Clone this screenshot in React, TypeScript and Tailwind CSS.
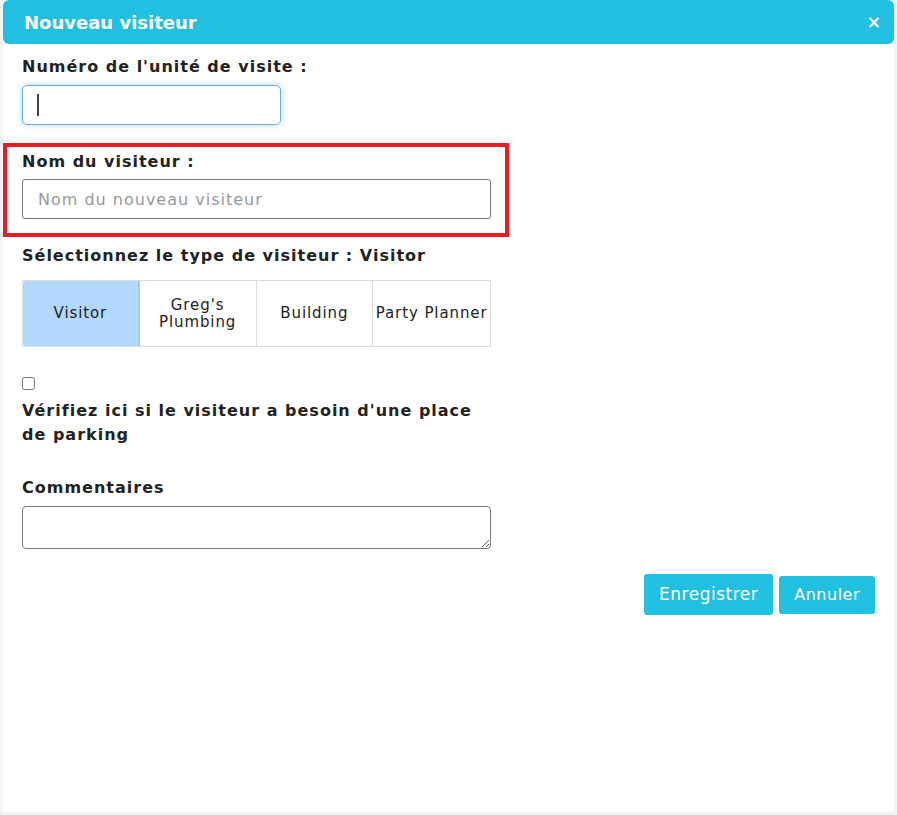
import { useState } from "react";

const types = ["Visitor", "Greg's Plumbing", "Building", "Party Planner"];

export default function App() {
  const [selected, setSelected] = useState<string>("Visitor");
  const [parking, setParking] = useState<boolean>(false);

  return (
    <div className="w-[897px] h-[815px] bg-[#f3f4f5] pl-[3px] pr-[3px] pb-[3px] font-['DejaVu_Sans',sans-serif] text-[#222]">
      <div className="h-full bg-white flex flex-col">
        <div className="h-[44px] bg-[#21c0e0] rounded-[6px] flex items-center justify-between pl-[21px] pr-[13px]">
          <h2 className="text-white font-bold text-[18px]">Nouveau visiteur</h2>
          <span className="text-white font-bold text-[17px] leading-none">×</span>
        </div>

        <div className="px-[19px] pt-[13px]">
          <label className="block font-bold text-[16px] tracking-[1px] leading-[20px]">
            Numéro de l'unité de visite :
          </label>
          <div className="mt-[8px] w-[259px] h-[40px] border border-[#66afe9] rounded-[5px] shadow-[0_0_6px_rgba(102,175,233,0.5)] flex items-center pl-[14px]">
            <span className="w-[2px] h-[22px] bg-[#444]" />
          </div>

          <div className="mt-[18px] -ml-[19px] w-[506px] border-4 border-[#ee1c25] pl-[15px] pr-[14px] pt-[5px] pb-[14px]">
            <label className="block font-bold text-[16px] tracking-[1px] leading-[20px]">Nom du visiteur :</label>
            <input
              type="text"
              placeholder="Nom du nouveau visiteur"
              className="mt-[7px] w-[469px] h-[40px] border border-[#767676] rounded-[3px] px-[15px] text-[16px] tracking-[1px] placeholder:text-[#999] outline-none"
            />
          </div>

          <p className="mt-[9px] font-bold text-[16px] tracking-[1px] leading-[20px]">
            Sélectionnez le type de visiteur : {selected}
          </p>
          <div className="mt-[14px] w-[469px] h-[67px] grid grid-cols-4 border border-[#dcdcdc]">
            {types.map((t, i) => (
              <button
                key={t}
                onClick={() => setSelected(t)}
                className={
                  selected === t
                    ? "bg-[#b3d8fd] border-r-2 border-[#a3c8ee] rounded-l-[3px] text-[15px] tracking-[0.9px] leading-[17px] px-0"
                    : "bg-white text-[15px] tracking-[0.9px] leading-[17px] px-0 " +
                      (i < 3 ? "border-r border-[#dcdcdc]" : "")
                }
              >
                {t === "Greg's Plumbing" ? (
                  <>
                    Greg's
                    <br />
                    Plumbing
                  </>
                ) : (
                  t
                )}
              </button>
            ))}
          </div>

          <input
            type="checkbox"
            checked={parking}
            onChange={() => setParking(!parking)}
            className="mt-[30px] block w-[13px] h-[13px]"
          />
          <p className="mt-[9px] w-[470px] font-bold text-[16px] tracking-[1px] leading-[24px]">
            Vérifiez ici si le visiteur a besoin d'une place de parking
          </p>

          <label className="block mt-[31px] font-bold text-[16px] tracking-[1px] leading-[20px]">
            Commentaires
          </label>
          <textarea className="mt-[8px] block w-[469px] h-[43px] border border-[#767676] rounded-[4px] outline-none" />

          <div className="mt-[25px] flex justify-end items-center gap-[6px]">
            <button className="h-[41px] px-[15px] bg-[#21c0e0] text-white text-[17px] tracking-[0.5px] rounded-[3px]">
              Enregistrer
            </button>
            <button className="h-[38px] px-[15px] bg-[#21c0e0] text-white text-[16px] tracking-[0.5px] rounded-[3px]">
              Annuler
            </button>
          </div>
        </div>
      </div>
    </div>
  );
}
